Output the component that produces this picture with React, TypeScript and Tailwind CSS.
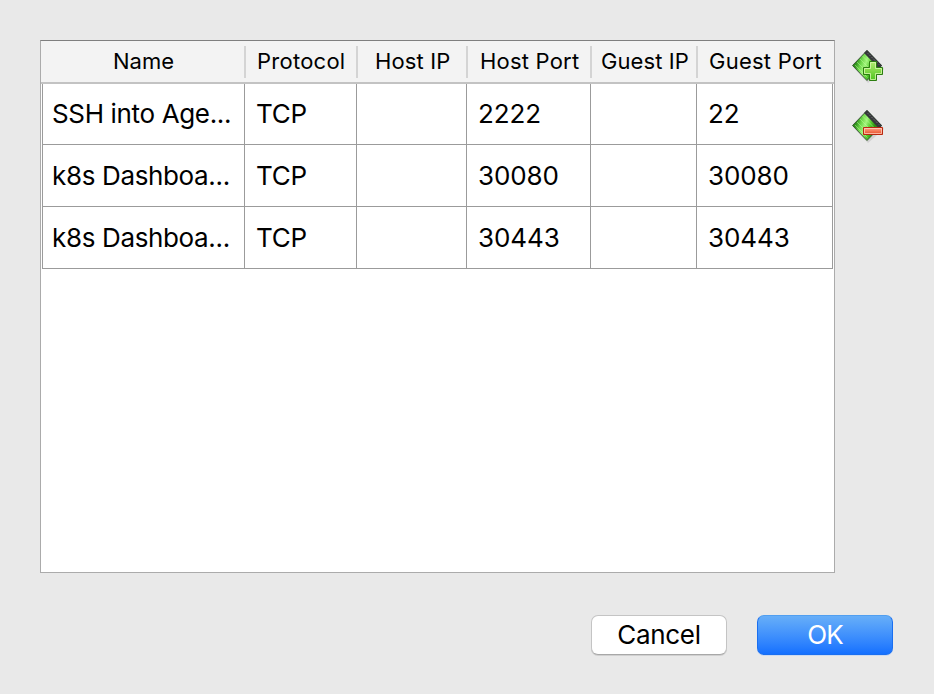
import React from "react";

const columns = [
  { label: "Name", head: "w-[205px] pl-[72px] tracking-[0px]", cell: "w-[202px] pl-[9px] tracking-[-0.35px]" },
  { label: "Protocol", head: "w-[112px] pl-[11px] tracking-[0.25px]", cell: "w-[112px] pl-[11px] tracking-[-0.2px]" },
  { label: "Host IP", head: "w-[110px] pl-[17px] tracking-[0.15px]", cell: "w-[110px] pl-[11px]" },
  { label: "Host Port", head: "w-[124px] pl-[12px] tracking-[0.2px]", cell: "w-[124px] pl-[11px] tracking-[-0.1px]" },
  { label: "Guest IP", head: "w-[106px] pl-[9px] tracking-[0.1px]", cell: "w-[106px] pl-[11px]" },
  { label: "Guest Port", head: "w-[136px] pl-[11px] tracking-[0.25px]", cell: "w-[136px] pl-[11px] tracking-[-0.1px]" },
];

const rows = [
  ["SSH into Age...", "TCP", "", "2222", "", "22"],
  ["k8s Dashboa...", "TCP", "", "30080", "", "30080"],
  ["k8s Dashboa...", "TCP", "", "30443", "", "30443"],
];

function RuleIcon({ kind }: { kind: "add" | "remove" }) {
  const id = "chip-" + kind;
  return (
    <svg width="36" height="36" viewBox="0 0 36 36" className="block">
      <defs>
        <linearGradient id={id} x1="0.1" y1="0.5" x2="0.7" y2="0.7">
          <stop offset="0" stopColor="#2f8f1c" />
          <stop offset="0.25" stopColor="#6fd84a" />
          <stop offset="0.5" stopColor="#a2f47c" />
          <stop offset="0.75" stopColor="#58cc30" />
          <stop offset="1" stopColor="#2c9412" />
        </linearGradient>
        <linearGradient id={id + "-sign"} x1="0" y1="0" x2="0" y2="1">
          <stop offset="0" stopColor={kind === "add" ? "#b4ec70" : "#ffa88c"} />
          <stop offset="1" stopColor={kind === "add" ? "#4cc41c" : "#e84a24"} />
        </linearGradient>
      </defs>
      <path d="M4 20 L18 35 L34 21 L31 16 Z" fill="#000" opacity="0.1" />
      <path d="M17 2.500 L31.500 17.500 L17 32.500 L2.500 17.500 Z" fill={"url(#" + id + ")"} stroke="#3d5a38" strokeWidth="1" />
      <path d="M17 2 L32 17.500 L29 20.500 L14 5 Z" fill="#36383a" />
      <path d="M18 5.500 L29 16.500" stroke="#8a8c8e" strokeWidth="1" strokeDasharray="1 1.500" />
      <path d="M12.500 8 L26 21.500 M10 11 L23 24 M7 14 L20 27 M5 17 L17.500 29.500" stroke="#c8ffa8" strokeWidth="0.8" opacity="0.55" />
      {kind === "add" ? (
        <>
          <path d="M19.500 13.500h7v6h6v7h-6v6h-7v-6h-6v-7h6z" fill={"url(#" + id + "-sign)"} stroke="#2c7d10" />
          <path d="M20.500 14.500h5v6h6v5h-6v6h-5v-6h-6v-5h6z" fill="none" stroke="#dcf9b4" strokeWidth="1" opacity="0.75" />
        </>
      ) : (
        <>
          <path d="M13.500 19.500h19v7h-19z" fill={"url(#" + id + "-sign)"} stroke="#b8280f" />
          <path d="M14.500 20.500h17v5h-17z" fill="none" stroke="#ffd2c2" strokeWidth="1" opacity="0.75" />
        </>
      )}
    </svg>
  );
}

export default function App() {
  return (
    <div className="h-[694px] w-[934px] overflow-hidden bg-[#e9e9e9] pl-[40px] pt-[40px] font-['Inter','Liberation_Sans',sans-serif] font-normal text-black">
      <div className="flex">
        <div className="h-[533px] w-[795px] border border-[#ababab] border-t-[#7f7f7f] bg-white">
          <div className="flex h-[43px] items-start border-b-2 border-[#c3c3c3] bg-[#f3f3f3] pt-[5px]">
            {columns.map((c, i) => (
              <div
                key={c.label}
                className={
                  "h-[32px] shrink-0 whitespace-nowrap text-[22px] leading-[30px] " +
                  c.head +
                  (i < 5 ? " border-r-2 border-[#d4d4d4]" : "")
                }
              >
                {c.label}
              </div>
            ))}
          </div>
          <div className="ml-px w-[791px] border-l border-[#9b9b9b]">
            {rows.map((r, ri) => (
              <div key={ri} className={ri === 0 ? "flex h-[61px] leading-[59px]" : "flex h-[62px] leading-[61px]"}>
                {r.map((t, i) => (
                  <div
                    key={i}
                    className={
                      "shrink-0 whitespace-nowrap border-b border-r border-[#9b9b9b] text-[26px] " +
                      columns[i].cell
                    }
                  >
                    {t}
                  </div>
                ))}
              </div>
            ))}
          </div>
        </div>
        <div className="ml-[15px] mt-[8px] flex flex-col gap-[24px]">
          <RuleIcon kind="add" />
          <RuleIcon kind="remove" />
        </div>
      </div>
      <div className="ml-[551px] mt-[42px] flex gap-[30px]">
        <button className="flex h-[40px] w-[136px] justify-center rounded-[7px] border border-[#c4c4c4] border-b-[#a8a8a8] bg-white text-[26px] leading-[37px] tracking-[-0.3px] shadow-[0_1px_0_#d0d0d0]">Cancel</button>
        <button className="flex h-[40px] w-[136px] justify-center rounded-[7px] border border-[#1a6ff0] border-t-[#519ff0] bg-linear-to-b from-[#67aef8] to-[#1470ff] text-[26px] leading-[37px] tracking-[-0.8px] text-white shadow-[0_1px_0_#cddaf0]">OK</button>
      </div>
    </div>
  );
}
